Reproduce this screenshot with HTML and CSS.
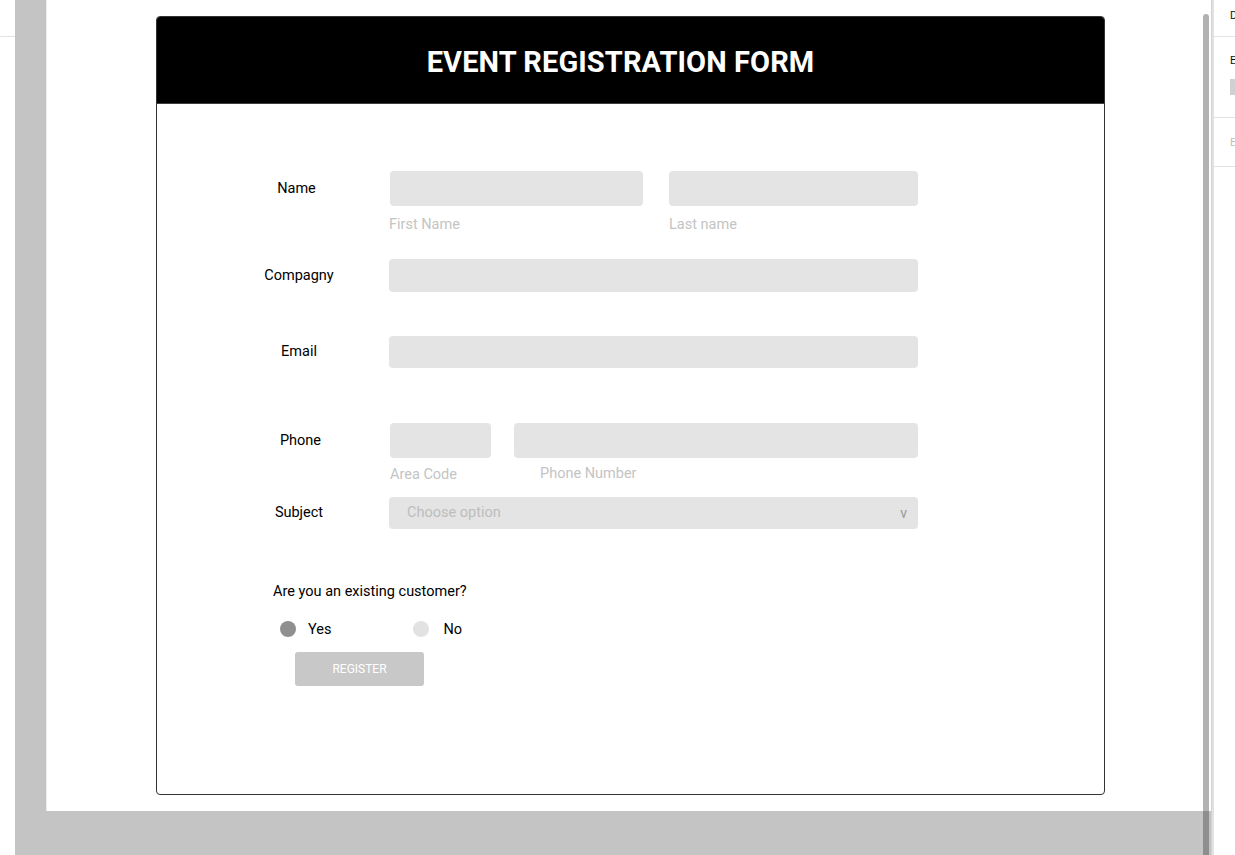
FILE: index.html
```html
<!DOCTYPE html>
<html lang="en">
<head>
<meta charset="utf-8">
<title>Event Registration Form</title>
<link rel="stylesheet" href="styles.css">
</head>
<body>
<aside class="left-panel"><div class="lp-top"></div></aside>
<main class="workspace">
  <div class="canvas">
    <section class="card">
      <header class="card-header"><h1 class="title">EVENT REGISTRATION FORM</h1></header>
      <div class="card-body">
        <div class="row row-name">
          <div class="label h35 label-name">Name</div>
          <div class="fields">
            <div class="field">
              <div class="input h35 w-first"></div>
              <div class="hint">First Name</div>
            </div>
            <div class="field gap-name">
              <div class="input h35 w-last"></div>
              <div class="hint">Last name</div>
            </div>
          </div>
        </div>
        <div class="row row-company">
          <div class="label h33">Compagny</div>
          <div class="fields"><div class="input h33 w-full"></div></div>
        </div>
        <div class="row row-email">
          <div class="label h32">Email</div>
          <div class="fields"><div class="input h32 w-full"></div></div>
        </div>
        <div class="row row-phone">
          <div class="label h35 label-phone">Phone</div>
          <div class="fields">
            <div class="field">
              <div class="input h35 w-area"></div>
              <div class="hint hint-area">Area Code</div>
            </div>
            <div class="field gap-phone">
              <div class="input h35 w-phone"></div>
              <div class="hint hint-phone">Phone Number</div>
            </div>
          </div>
        </div>
        <div class="row row-subject">
          <div class="label h32">Subject</div>
          <div class="fields">
            <div class="input h32 w-full select">
              <span class="placeholder">Choose option</span>
              <span class="caret">v</span>
            </div>
          </div>
        </div>
        <p class="question">Are you an existing customer?</p>
        <div class="radios">
          <div class="radio"><span class="dot dot-on"></span><span class="radio-text">Yes</span></div>
          <div class="radio radio-no"><span class="dot dot-off"></span><span class="radio-text">No</span></div>
        </div>
        <button class="register" type="button">REGISTER</button>
      </div>
    </section>
  </div>
  <div class="scrollbar"></div>
</main>
<div class="divider"></div>
<aside class="right-panel">
  <div class="rp-sec rp-1"><span class="rp-text">D</span></div>
  <div class="rp-sec rp-2"><span class="rp-text">E</span><div class="rp-box"></div></div>
  <div class="rp-sec rp-3"><span class="rp-text rp-muted">E</span></div>
</aside>
</body>
</html>
```
FILE: styles.css
```css
* { box-sizing: border-box; }
html, body { margin: 0; padding: 0; }
body {
  width: 1235px;
  height: 855px;
  overflow: hidden;
  display: flex;
  font-family: Roboto, "Liberation Sans", Arial, sans-serif;
  background: #ffffff;
  color: #000;
}
.left-panel { width: 15px; flex: none; background: #fff; }
.lp-top { height: 37px; border-bottom: 1px solid #e2e2e2; }

.workspace {
  position: relative;
  width: 1196px;
  flex: none;
  background: #c4c4c4;
  padding-left: 31px;
}
.canvas {
  width: 1165px;
  height: 811px;
  background: #fff;
  border-left: 1px solid #ececec;
  padding-top: 16px;
  padding-left: 109px;
}
.scrollbar {
  position: absolute;
  left: 1188px;
  top: 14px;
  width: 6px;
  bottom: 0;
  border-radius: 3px 3px 0 0;
  background: linear-gradient(#b2b2b2 0, #b2b2b2 797px, #8e8e8e 797px);
}
.divider {
  width: 3px;
  flex: none;
  background: #e2e2e2;
  border-left: 1px solid #d2d2d2;
}
.right-panel { width: 21px; flex: none; background: #fff; overflow: hidden; }
.rp-sec { border-bottom: 1px solid #e2e2e2; padding-left: 16px; }
.rp-1 { height: 37px; padding-top: 10px; }
.rp-2 { height: 81px; padding-top: 18px; }
.rp-3 { height: 49px; padding-top: 19px; }
.rp-text { font-size: 11px; line-height: 12px; display: block; color: #111; }
.rp-muted { color: #bdbdbd; }
.rp-box { width: 8px; height: 16px; background: #d0d0d0; margin-top: 12px; }

.card {
  width: 949px;
  height: 779px;
  border: 1px solid #333;
  border-radius: 4px;
  overflow: hidden;
  background: #fff;
}
.card-header {
  height: 87px;
  background: #000;
  border-bottom: 1px solid #3c3c3c;
  display: flex;
  align-items: center;
  justify-content: center;
  padding: 4px 20px 0 0;
}
.title {
  margin: 0;
  color: #fff;
  font-family: Roboto, "Liberation Sans", Arial, sans-serif;
  font-weight: 700;
  font-size: 29px;
  letter-spacing: 0.1px;
}
.card-body {
  padding-top: 67px;
  padding-left: 92px;
  font-size: 14.5px;
}
.row { display: flex; align-items: flex-start; }
.label { width: 100px; text-align: center; flex: none; }
.label-name { padding-right: 5px; }
.label-phone { padding-left: 3px; }
.h35 { height: 35px; line-height: 35px; }
.h33 { height: 33px; line-height: 33px; }
.h32 { height: 32px; line-height: 32px; }
.fields { display: flex; margin-left: 40px; }
.field { display: flex; flex-direction: column; }
.input { background: #e4e4e4; border-radius: 4px; }
.w-first { width: 253px; margin-left: 1px; }
.w-last { width: 249px; }
.gap-name { margin-left: 26px; }
.w-full { width: 529px; }
.w-area { width: 101px; margin-left: 1px; }
.w-phone { width: 404px; }
.gap-phone { margin-left: 23px; }
.hint {
  color: #c4c4c4;
  font-size: 14.5px;
  line-height: 16px;
  margin-top: 11px;
}
.hint-area { margin-top: 9px; margin-left: 1px; }
.hint-phone { margin-top: 8px; margin-left: 26px; }

.row-company { margin-top: 26px; }
.row-email { margin-top: 44px; }
.row-phone { margin-top: 55px; }
.row-subject { margin-top: 14px; }

.select {
  display: flex;
  justify-content: space-between;
  align-items: center;
  padding: 0 11px 0 18px;
}
.placeholder { color: #bdbdbd; font-size: 14.5px; }
.caret { color: #9a9a9a; font-size: 14px; }

.question {
  margin: 53px 0 0 24px;
  font-size: 14.5px;
  line-height: 20px;
}
.radios {
  display: flex;
  margin-top: 17px;
  margin-left: 31px;
  height: 20px;
  align-items: center;
}
.radio { display: flex; align-items: center; }
.radio-no { margin-left: 82px; }
.dot { width: 16px; height: 16px; border-radius: 50%; display: block; }
.dot-on { background: #8f8f8f; }
.dot-off { background: #e2e2e2; }
.radio-text { margin-left: 12px; font-size: 14.5px; }
.radio-no .radio-text { margin-left: 14px; }
.register {
  display: block;
  margin: 13px 0 0 46px;
  width: 129px;
  height: 34px;
  border: 0;
  border-radius: 3px;
  background: #c8c8c8;
  color: #fff;
  font-family: Roboto, "Liberation Sans", Arial, sans-serif;
  font-size: 12px;
  padding: 0;
}
```
